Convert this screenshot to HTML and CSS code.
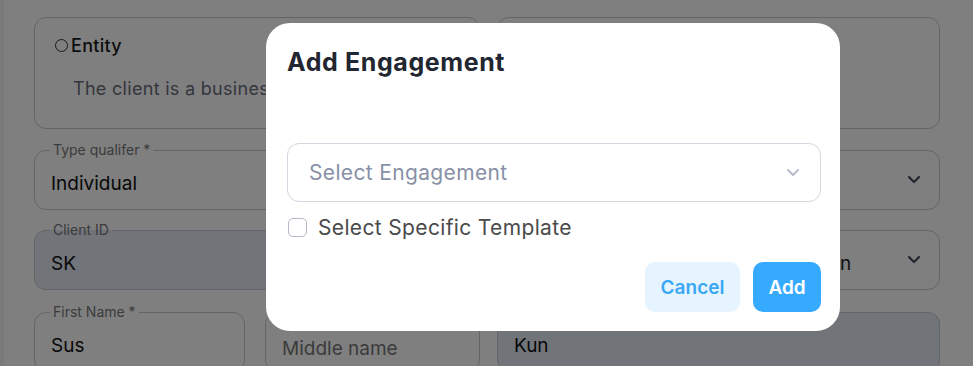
FILE: index.html
```html
<!doctype html>
<html>
<head>
    <title>Add Engagement</title>
    <link rel="stylesheet" href="styles.css">
</head>
<body>
    <div class = "page">
        <div class = "form">
            <div class = "card">
                <label class = "card__title"><span class = "radio"></span>Entity</label>
                <p class = "card__text">The client is a business or organisation</p>
            </div>
            <div class = "card"></div>

            <fieldset class = "field">
                <legend class = "field__label">Type qualifer *</legend>
                <span class = "field__value">Individual</span>
            </fieldset>
            <fieldset class = "field field--select field--bare">
                <span class = "field__value"></span>
                <svg class = "chevron" width="14" height="9" viewBox="0 0 14 9"><path d="M2 2l5 5 5-5" fill="none" stroke="#454b5c" stroke-width="2.2" stroke-linecap="round" stroke-linejoin="round"/></svg>
            </fieldset>

            <fieldset class = "field field--filled">
                <legend class = "field__label">Client ID</legend>
                <span class = "field__value">SK</span>
            </fieldset>
            <fieldset class = "field field--select field--bare">
                <span class = "field__value field__value--clip">n</span>
                <svg class = "chevron" width="14" height="9" viewBox="0 0 14 9"><path d="M2 2l5 5 5-5" fill="none" stroke="#454b5c" stroke-width="2.2" stroke-linecap="round" stroke-linejoin="round"/></svg>
            </fieldset>

            <div class = "split">
                <fieldset class = "field">
                    <legend class = "field__label">First Name *</legend>
                    <span class = "field__value">Sus</span>
                </fieldset>
                <fieldset class = "field field--plain">
                    <span class = "field__value field__value--ph">Middle name</span>
                </fieldset>
            </div>
            <fieldset class = "field field--filled field--plain">
                <span class = "field__value">Kun</span>
            </fieldset>
        </div>
    </div>

    <div class = "overlay"></div>

    <div class = "modal">
        <h2 class = "modal__title">Add Engagement</h2>
        <div class = "select">
            <span class = "select__placeholder">Select Engagement</span>
            <svg width="14" height="9" viewBox="0 0 14 9"><path d="M2 2l5 5 5-5" fill="none" stroke="#b7bccb" stroke-width="2" stroke-linecap="round" stroke-linejoin="round"/></svg>
        </div>
        <label class = "check">
            <span class = "check__box"></span>
            Select Specific Template
        </label>
        <div class = "modal__actions">
            <button class = "btn btn--light">Cancel</button>
            <button class = "btn btn--primary">Add</button>
        </div>
    </div>
</body>
</html>
```

FILE: styles.css
```css
* {
    box-sizing: border-box;
}

body {
    margin: 0;
    font-family: Inter, "Open Sans", sans-serif;
    background: #fff;
    height: 366px;
    overflow: hidden;
}

.page {
    padding: 17px 33px 0 34px;
    border-left: 4px solid #f4f4f4;
}

.form {
    display: grid;
    grid-template-columns: 446px 1fr;
    column-gap: 17px;
    row-gap: 12px;
    margin-left: -4px;
}

.card {
    height: 112px;
    border: 1px solid #c9c9cf;
    border-radius: 12px;
    padding: 17px 20px;
    margin-bottom: 1px;
}

.card__title {
    display: flex;
    align-items: center;
    gap: 3px;
    font-size: 18px;
    font-weight: 500;
    color: #1b1b1b;
    letter-spacing: 0.3px;
}

.radio {
    width: 13px;
    height: 13px;
    border: 1px solid #333;
    border-radius: 50%;
}

.card__text {
    margin: 22px 0 0 18px;
    font-size: 18px;
    color: #6a6d7c;
    white-space: nowrap;
    letter-spacing: 0.3px;
}

.field {
    position: relative;
    margin: 0;
    height: 68px;
    border: 1px solid #c7c9d2;
    border-radius: 12px;
    padding: 0 16px;
    display: flex;
    align-items: center;
    min-width: 0;
}

.field--plain,
.field--bare {
    height: 60px;
    margin-top: 8px;
}

.field--filled {
    background: #e2e8f3;
}

.field__label {
    padding: 0 3px;
    margin-left: -1px;
    font-size: 14px;
    color: #777;
    line-height: 16px;
}

.field__value {
    font-size: 19px;
    color: #111;
    margin-top: 0;
}

.field--plain .field__value,
.field--bare .field__value {
    margin-top: 6px;
}

.field__value--ph {
    color: #777;
    margin-top: 12px !important;
}

.field__value--clip {
    margin-left: 326px;
    color: #1b1e2b;
}

.field--select {
    justify-content: space-between;
}

.chevron {
    margin: -2px 2px 0 0;
}

.split {
    display: grid;
    grid-template-columns: 211px 1fr;
    column-gap: 20px;
    margin-top: 2px;
}

.split + .field {
    margin-top: 10px;
}

.overlay {
    position: fixed;
    inset: 0;
    background: rgba(0, 0, 0, 0.5);
}

.modal {
    position: fixed;
    top: 23px;
    left: 266px;
    width: 574px;
    height: 308px;
    background: #fff;
    border-radius: 24px;
    padding: 24px 19px 19px 21px;
    display: flex;
    flex-direction: column;
}

.modal__title {
    margin: 0;
    font-size: 25px;
    font-weight: 700;
    color: #222630;
    line-height: 30px;
    letter-spacing: 0.6px;
}

.select {
    margin-top: 66px;
    height: 59px;
    border: 1px solid #d4d6e0;
    border-radius: 12px;
    padding: 0 20px 0 21px;
    display: flex;
    align-items: center;
    justify-content: space-between;
}

.select__placeholder {
    font-size: 21px;
    color: #8891a6;
    letter-spacing: 0.35px;
}

.check {
    margin-top: 13px;
    display: flex;
    align-items: center;
    gap: 11px;
    font-size: 21px;
    color: #4a4a4a;
    padding-left: 1px;
    letter-spacing: 0.35px;
}

.check__box {
    width: 19px;
    height: 19px;
    border: 1px solid #b5b9c7;
    border-radius: 5px;
}

.modal__actions {
    margin-top: auto;
    display: flex;
    justify-content: flex-end;
    gap: 13px;
}

.btn {
    height: 50px;
    border: none;
    border-radius: 10px;
    font-family: inherit;
    font-size: 19px;
    font-weight: 600;
    padding: 0 15px;
}

.btn--light {
    width: 95px;
    background: #e6f4ff;
    color: #3aa8f4;
}

.btn--primary {
    width: 68px;
    background: #36aaff;
    color: #fff;
}
```
